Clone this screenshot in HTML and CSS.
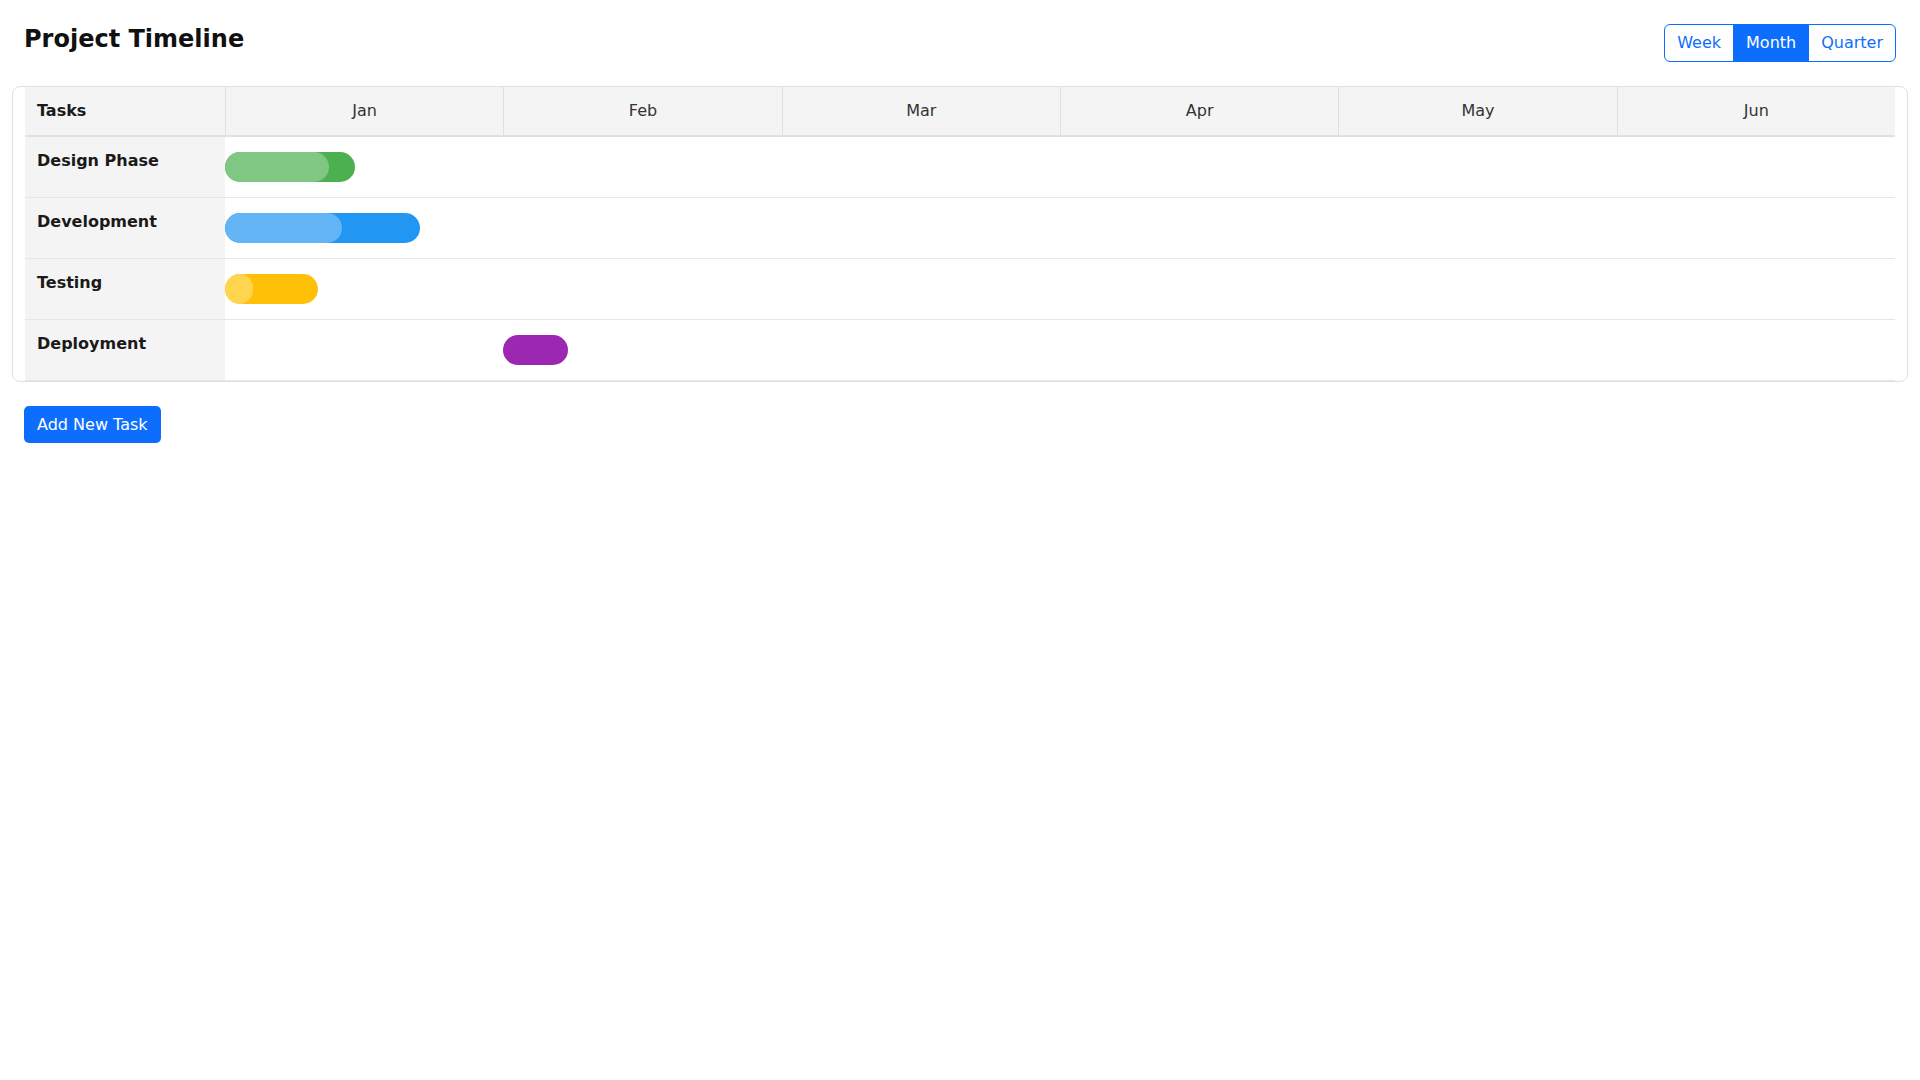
FILE: index.html
```html
<!DOCTYPE html>
<html lang="en">

<head>
    <meta charset="UTF-8">
    <meta name="viewport" content="width=device-width, initial-scale=1.0">
    <title>Project Timeline</title>

    <link rel="stylesheet" href="styles.css">
</head>

<body>
    <div class="top">
        <h1 class="title">Project Timeline</h1>
        <div class="views">
            <button class="view">Week</button>
            <button class="view active">Month</button>
            <button class="view">Quarter</button>
        </div>
    </div>

    <div class="timeline">
        <div class="head">
            <div class="head-task">Tasks</div>
            <div class="month">Jan</div>
            <div class="month">Feb</div>
            <div class="month">Mar</div>
            <div class="month">Apr</div>
            <div class="month">May</div>
            <div class="month">Jun</div>
        </div>

        <div class="row">
            <div class="task">Design Phase</div>
            <div class="track">
                <div class="bar green" style="margin-left: 0%; width: 7.778%;">
                    <div class="progress" style="width: 80%;"></div>
                </div>
            </div>
        </div>
        <div class="row">
            <div class="task">Development</div>
            <div class="track">
                <div class="bar blue" style="margin-left: 0%; width: 11.667%;">
                    <div class="progress" style="width: 60%;"></div>
                </div>
            </div>
        </div>
        <div class="row">
            <div class="task">Testing</div>
            <div class="track">
                <div class="bar yellow" style="margin-left: 0%; width: 5.556%;">
                    <div class="progress" style="width: 30%;"></div>
                </div>
            </div>
        </div>
        <div class="row">
            <div class="task">Deployment</div>
            <div class="track">
                <div class="bar purple" style="margin-left: 16.667%; width: 3.889%;">
                    <div class="progress" style="width: 0%;"></div>
                </div>
            </div>
        </div>
    </div>

    <button class="add">Add New Task</button>
</body>

</html>
```

FILE: styles.css
```css
body {
    margin: 0;
    padding: 24px;
    font-family: "DejaVu Sans", sans-serif;
    color: #1a1a1a;
    background: #fff;
}

.top {
    display: flex;
    justify-content: space-between;
    align-items: flex-start;
    margin-bottom: 24px;
}

.title {
    margin: 0;
    padding-top: 1px;
    font-size: 24px;
    font-weight: bold;
    line-height: 28px;
    color: #111;
}

.views {
    display: flex;
}

.view {
    font-family: inherit;
    font-size: 16px;
    line-height: 24px;
    padding: 6px 12px;
    border: 1px solid #0d6efd;
    background: #fff;
    color: #0d6efd;
    cursor: pointer;
}

.view + .view {
    margin-left: -1px;
}

.view:first-child {
    border-radius: 6px 0 0 6px;
}

.view:last-child {
    border-radius: 0 6px 6px 0;
}

.view.active {
    background: #0d6efd;
    color: #fff;
}

.timeline {
    margin: 0 -12px;
    padding: 0 12px;
    border: 1px solid #e0e0e0;
    border-radius: 8px;
}

.head {
    display: grid;
    grid-template-columns: 200px repeat(6, 1fr);
    background: #f4f4f4;
    border-bottom: 2px solid #e0e0e0;
}

.head-task {
    padding: 14px 12px 15px;
    font-weight: bold;
    line-height: 19px;
}

.month {
    padding: 14px 12px 15px;
    line-height: 19px;
    text-align: center;
    color: #333;
    border-left: 1px solid #e0e0e0;
}

.row {
    display: grid;
    grid-template-columns: 200px 1fr;
    border-bottom: 1px solid #e6e6e6;
}

.task {
    padding: 14px 12px 11px;
    font-weight: bold;
    line-height: 19px;
    background: #f4f4f4;
}

.track {
    padding: 15px 0;
}

.bar {
    height: 30px;
    border-radius: 15px;
    overflow: hidden;
}

.progress {
    height: 100%;
    border-radius: 15px;
}

.green {
    background: #4caf50;
}

.green .progress {
    background: #81c784;
}

.blue {
    background: #2196f3;
}

.blue .progress {
    background: #64b5f6;
}

.yellow {
    background: #ffc107;
}

.yellow .progress {
    background: #ffd54f;
}

.purple {
    background: #9c27b0;
}

.add {
    margin-top: 24px;
    font-family: inherit;
    font-size: 16px;
    line-height: 21px;
    padding: 8px 13px;
    border: none;
    border-radius: 5px;
    background: #0d6efd;
    color: #fff;
    cursor: pointer;
}
```
